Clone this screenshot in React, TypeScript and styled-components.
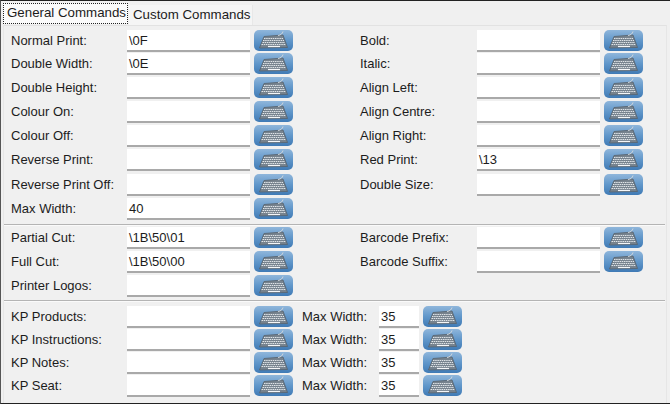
import styled, { createGlobalStyle } from "styled-components";

const Global = createGlobalStyle`
  html, body { margin: 0; padding: 0; background: #f0f0f0; }
  body { font-family: "Liberation Sans", Arial, sans-serif; font-size: 13px; color: #1c1c1c; }
`;

const Frame = styled.div`
  width: 670px;
  height: 404px;
  box-sizing: border-box;
  border-top: 1px solid #222;
  border-left: 1px solid #555;
  border-bottom: 1px solid #222;
  background: #f0f0f0;
  overflow: hidden;
`;

const TabBar = styled.div`
  display: flex;
  align-items: flex-start;
  height: 24px;
  padding-left: 2px;
  gap: 1px;
`;

const Tab = styled.div<{ $active?: boolean }>`
  height: ${(p) => (p.$active ? "21px" : "20px")};
  margin-top: ${(p) => (p.$active ? "2px" : "4px")};
  line-height: 20px;
  padding: 0 2px 0 4px;
  box-sizing: border-box;
  font-size: 13.3px;
  white-space: nowrap;
  background: ${(p) => (p.$active ? "#fbfbfb" : "#f5f5f5")};
  outline: ${(p) => (p.$active ? "1px dotted #222" : "none")};
  outline-offset: -1px;
  border-right: ${(p) => (p.$active ? "none" : "1px solid #e8e8e8")};
`;

const Pane = styled.div`
  margin: 0 3px 0 2px;
  border-top: 1px solid #e2e2e2;
  border-left: 1px solid #e6e6e6;
  border-right: 1px solid #e6e6e6;
  height: 378px;
  box-sizing: border-box;
`;

const Section = styled.div<{ $rows: string; $pad: number; $height: number }>`
  display: grid;
  grid-template-columns: 350px 1fr;
  grid-template-rows: ${(p) => p.$rows};
  grid-auto-flow: column;
  height: ${(p) => p.$height}px;
  box-sizing: border-box;
  padding-top: ${(p) => p.$pad}px;
`;

const KpList = styled.div`
  display: grid;
  grid-template-rows: repeat(4, 23px);
  box-sizing: border-box;
  padding-top: 4px;
`;

const Divider = styled.div`
  height: 1px;
  margin: 0 1px 0 0;
  background: #b4b4b4;
  border-bottom: 1px solid #fafafa;
`;

const Row = styled.div`
  display: flex;
  align-items: flex-start;
`;

const Label = styled.div<{ $width?: number; $indent?: number }>`
  width: ${(p) => p.$width ?? 116}px;
  margin-left: ${(p) => p.$indent ?? 7}px;
  line-height: 22px;
  white-space: nowrap;
`;

const Field = styled.div<{ $width?: number }>`
  width: ${(p) => p.$width ?? 123}px;
  height: 22px;
  box-sizing: border-box;
  background: #fff;
  border-bottom: 2px solid #a9a9a9;
  line-height: 21px;
  padding-left: 2px;
`;

const KeyButton = styled.div`
  width: 39px;
  height: 21px;
  margin-left: 4px;
  border-radius: 5px;
  background: linear-gradient(#8fb6db, #6197ca 50%, #3f7ab5);
  display: flex;
  align-items: center;
  justify-content: center;
`;

function KeyboardIcon() {
  return (
    <svg width="33" height="21" viewBox="0 0 33 21">
      <path d="M7 6.500 L26 5 L30.500 17.500 L2.500 18 Z" fill="#77838e" stroke="#56626d" strokeWidth="0.8" />
      <path d="M7 8.500 H26 M6 10.500 H27 M5.500 12.500 H28 M4.500 14.500 H29" stroke="#dfe4e8" strokeWidth="1.200" strokeDasharray="1.500 0.700" />
      <path d="M11 16.500 H23" stroke="#f4f6f8" strokeWidth="1.200" />
      <path d="M21 5.500 C24 5 25.500 3.500 26 1.500" fill="none" stroke="#d2d7dc" strokeWidth="1" />
    </svg>
  );
}

function Cmd({ label, value, indent, labelWidth }: { label: string; value?: string; indent?: number; labelWidth?: number }) {
  return (
    <Row>
      <Label $indent={indent} $width={labelWidth}>{label}</Label>
      <Field>{value}</Field>
      <KeyButton><KeyboardIcon /></KeyButton>
    </Row>
  );
}

const rightProps = { indent: 6, labelWidth: 117 };

const kpRows = ["KP Products:", "KP Instructions:", "KP Notes:", "KP Seat:"];

export default function App() {
  return (
    <>
      <Global />
      <Frame>
        <TabBar>
          <Tab $active>General Commands</Tab>
          <Tab>Custom Commands</Tab>
        </TabBar>
        <Pane>
          <Section $rows="23px 24px 24px 24px 24px 25px 24px 24px" $pad={4} $height={198}>
            <Cmd label="Normal Print:" value="\0F" />
            <Cmd label="Double Width:" value="\0E" />
            <Cmd label="Double Height:" />
            <Cmd label="Colour On:" />
            <Cmd label="Colour Off:" />
            <Cmd label="Reverse Print:" />
            <Cmd label="Reverse Print Off:" />
            <Cmd label="Max Width:" value="40" />
            <Cmd label="Bold:" {...rightProps} />
            <Cmd label="Italic:" {...rightProps} />
            <Cmd label="Align Left:" {...rightProps} />
            <Cmd label="Align Centre:" {...rightProps} />
            <Cmd label="Align Right:" {...rightProps} />
            <Cmd label="Red Print:" value="\13" {...rightProps} />
            <Cmd label="Double Size:" {...rightProps} />
          </Section>
          <Divider />
          <Section $rows="24px 24px 24px" $pad={1} $height={74}>
            <Cmd label="Partial Cut:" value="\1B\50\01" />
            <Cmd label="Full Cut:" value="\1B\50\00" />
            <Cmd label="Printer Logos:" />
            <Cmd label="Barcode Prefix:" {...rightProps} />
            <Cmd label="Barcode Suffix:" {...rightProps} />
          </Section>
          <Divider />
          <KpList>
            {kpRows.map((k) => (
              <Row key={k}>
                <Label>{k}</Label>
                <Field />
                <KeyButton><KeyboardIcon /></KeyButton>
                <Label $width={77} $indent={9}>Max Width:</Label>
                <Field $width={40}>35</Field>
                <KeyButton><KeyboardIcon /></KeyButton>
              </Row>
            ))}
          </KpList>
        </Pane>
      </Frame>
    </>
  );
}
